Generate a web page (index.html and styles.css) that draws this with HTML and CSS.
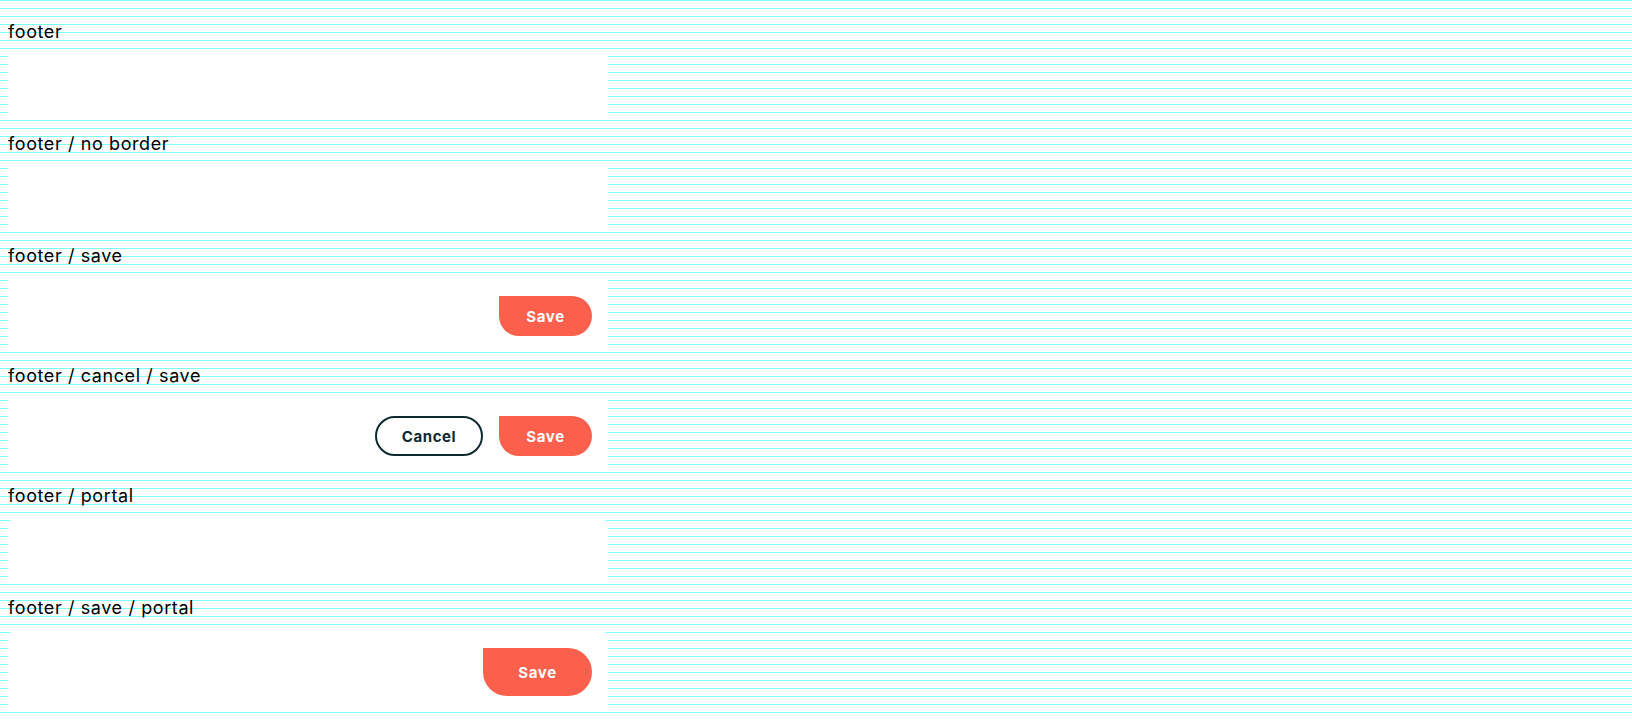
FILE: index.html
```html
<!DOCTYPE html>
<html lang="en">
<head>
<meta charset="utf-8">
<title>Footer variants</title>
<link rel="stylesheet" href="styles.css">
</head>
<body>
  <section class="variant">
    <div class="variant-label">footer</div>
    <div class="footer"></div>
  </section>
  <section class="variant">
    <div class="variant-label">footer / no border</div>
    <div class="footer footer--no-border"></div>
  </section>
  <section class="variant">
    <div class="variant-label">footer / save</div>
    <div class="footer">
      <button class="btn btn-primary">Save</button>
    </div>
  </section>
  <section class="variant">
    <div class="variant-label">footer / cancel / save</div>
    <div class="footer">
      <button class="btn btn-secondary">Cancel</button>
      <button class="btn btn-primary">Save</button>
    </div>
  </section>
  <section class="variant">
    <div class="variant-label">footer / portal</div>
    <div class="footer footer--portal"></div>
  </section>
  <section class="variant">
    <div class="variant-label">footer / save / portal</div>
    <div class="footer footer--portal">
      <button class="btn btn-primary btn-large">Save</button>
    </div>
  </section>
</body>
</html>
```
FILE: styles.css
```css
html {
  background-color: #ffffff;
  background-image: repeating-linear-gradient(
    to bottom,
    #80ffff 0,
    #80ffff 1px,
    transparent 1px,
    transparent 8px
  );
}

body {
  margin: 8px;
  font-family: "Inter", "Liberation Sans", sans-serif;
  color: #000000;
}

.variant {
  display: flex;
  flex-direction: column;
}

.variant-label {
  width: 600px;
  height: 41px;
  box-sizing: border-box;
  padding-top: 12px;
  font-size: 18px;
  line-height: 24px;
  font-weight: 400;
  letter-spacing: 0.6px;
}

.footer {
  width: 600px;
  min-height: 71px;
  box-sizing: border-box;
  padding: 23px 16px 16px;
  background: #ffffff;
  display: flex;
  justify-content: flex-end;
  align-items: flex-start;
  gap: 16px;
}

.footer--portal {
  border-radius: 16px 16px 0 0;
}

.btn {
  box-sizing: border-box;
  height: 40px;
  display: inline-flex;
  align-items: center;
  justify-content: center;
  font-family: "Inter", "Liberation Sans", sans-serif;
  font-size: 15px;
  font-weight: 700;
  letter-spacing: 0.6px;
  cursor: pointer;
  padding: 0;
}

.btn-primary {
  width: 93px;
  background: #fa604c;
  color: #ffffff;
  border: none;
  border-radius: 0 20px 20px 20px;
}

.btn-secondary {
  width: 108px;
  background: #ffffff;
  color: #0f2a2f;
  border: 2.5px solid #0f2a2f;
  border-radius: 20px;
}

.btn-large {
  width: 109px;
  height: 48px;
  border-radius: 0 24px 24px 24px;
}
```
